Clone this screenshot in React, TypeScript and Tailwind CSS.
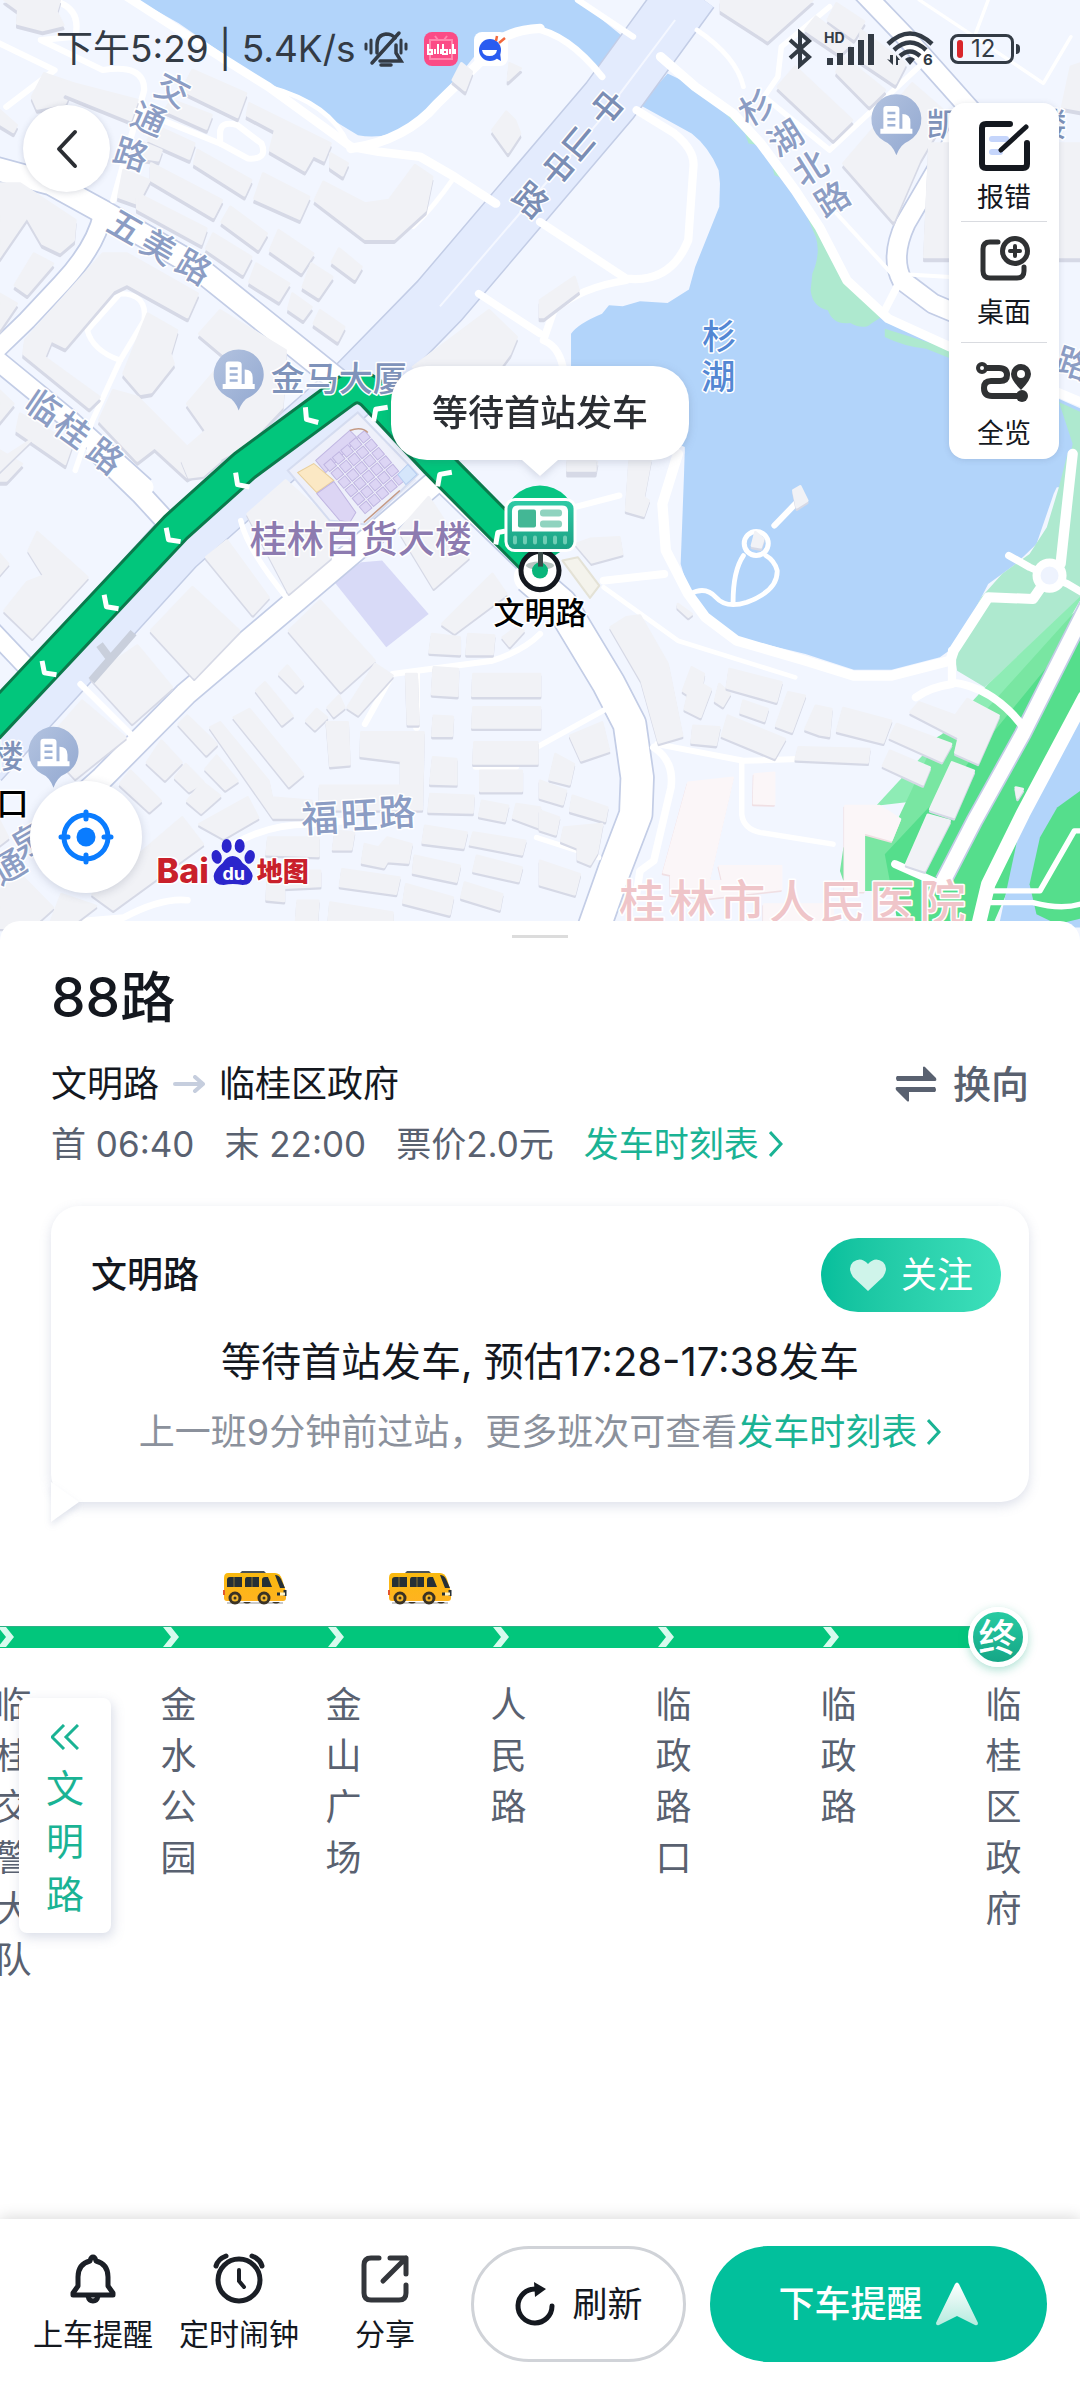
import React from "react";

// ---------- map data ----------
// the map is split in four tiles, each one is drawn in its own tile units

type Road = { d: string; w: number };
type Shape = { d: string; c: string };
type Tile = {
  x: number;
  y: number;
  areas: Shape[];
  cased: Road[];
  roads: Road[];
  buildings: string[];
};

const WATER = "#b2d4fa";

const tiles: Tile[] = [
  {
    x: 0,
    y: 0,
    areas: [
      {
        c: WATER,
        d: "M400 0L520 70L640 155L770 250L880 300L960 355L1040 405Q1090 415 1140 400Q1200 380 1240 330L1330 230L1400 140Q1450 95 1520 80L1580 85V0Z",
      },
    ],
    cased: [
      { d: "M-30 500L150 550L300 635L560 790L850 1030L1030 1180", w: 66 },
      { d: "M300 640Q280 740 180 850L80 960L-30 1070", w: 50 },
      { d: "M-30 1060L200 1255L420 1460", w: 54 },
    ],
    roads: [
      { d: "M370 -10L640 170L780 260L900 350L1020 440L1100 455L1220 470L1320 530L1440 610", w: 26 },
      { d: "M1020 445Q1180 420 1270 310L1390 190Q1440 90 1568 85", w: 28 },
      { d: "M780 260Q960 310 1010 430", w: 14 },
      { d: "M1320 530Q1260 620 1200 680", w: 14 },
      { d: "M150 0Q240 20 220 110L120 120L300 210Q420 190 420 270L330 600", w: 18 },
      { d: "M0 130L160 210L20 320", w: 18 },
      { d: "M330 300L520 380L640 430", w: 18 },
      { d: "M640 400Q640 360 690 375L760 430Q780 480 720 475L640 430Z", w: 18 },
      { d: "M350 880Q430 880 420 960L350 1080Q270 1050 255 990Z", w: 16 },
      { d: "M350 1080L270 1260L220 1410", w: 16 },
      { d: "M1390 880L1568 1000", w: 22 },
    ],
    buildings: [
      "15,0 55,30 52,70 125,90 185,75 165,35 175,0",
      "95,290 130,220 215,250 190,310 110,325",
      "215,250 400,300 380,360 190,280",
      "560,210 715,280 690,350 530,270",
      "500,300 615,345 600,385 480,330",
      "725,310 960,430 940,480 910,465 885,510 785,450 800,390 718,345",
      "960,460 1010,490 995,525 960,500",
      "460,380 565,430 550,475 430,420",
      "575,450 730,540 710,585 565,490",
      "400,420 470,450 460,480 400,470",
      "440,490 645,600 620,650 440,540",
      "360,510 435,540 400,610 345,590",
      "765,520 898,590 870,655 740,595",
      "400,580 600,685 585,730 400,625",
      "940,545 1060,610 1130,600 1205,495 1255,530 1235,630 1145,715 1060,715 915,600",
      "670,620 775,700 750,745 645,665",
      "620,700 730,770 705,820 600,745",
      "810,690 910,760 875,815 785,750",
      "745,790 840,850 810,900 725,845",
      "905,790 965,830 925,890 880,860",
      "985,745 1050,800 1030,835 965,785",
      "850,880 905,920 880,955 838,925",
      "930,930 1000,980 980,1020 912,970",
      "0,550 60,550 220,660 215,720 175,755 125,730 80,650 0,770",
      "100,760 155,790 80,880 45,855",
      "0,880 50,910 0,985",
      "300,760 370,760 575,880 545,950 370,850 330,870 190,1040 150,1020 130,1070 290,1190 260,1220 70,1060 75,1020",
      "430,940 515,990 495,1060 505,1090 440,1175 410,1180 360,1120",
      "640,930 830,1050 820,1220 720,1330 545,1430 450,1340 400,1380 290,1260 330,1170 400,1190 545,1340 600,1290 545,1210 660,1070 580,1000",
      "1420,930 1500,1010 1480,1060 1380,1200 1200,1100",
      "1340,190 1370,215 1350,270 1315,240",
      "1480,190 1512,205 1475,240",
      "1470,335 1495,360 1510,400 1475,455 1430,390",
      "0,1170 40,1210 0,1260",
      "60,1240 210,1330 190,1390 50,1290",
      "0,1350 65,1390 20,1440 0,1440",
      "0,330 50,375 40,395 0,370",
    ],
  },
  {
    x: 540,
    y: 0,
    areas: [
      { c: WATER, d: "M-20 0H110L265 130L185 220L180 215Q80 100 -20 85Z" },
      {
        c: WATER,
        d: "M370 220L440 255L640 430L800 650L880 830L1000 950L1190 1050L1580 1230V1460H420V1340L90 1200V1000Q110 970 180 940L200 915L240 918L290 903L370 908L432 868L450 800L520 620L522 550L518 510Q490 440 440 400L290 315Z",
      },
      {
        c: "#aee9cf",
        d: "M435 250L540 330L600 380L640 435L605 430L595 400L510 310L470 275ZM670 480L760 590L750 600L720 540L680 525ZM750 590L800 650L890 830L990 950L960 970Q940 990 900 968Q850 975 835 930Q790 920 785 870L790 820Q815 760 800 710Z",
      },
      { c: "#aee9cf", d: "M1000 985L1200 1050V1078L1120 1045Q1060 1040 1000 1010Z" },
      { c: "#aee9cf", d: "M1505 1205L1568 1235V1460H1520L1545 1330Z" },
    ],
    cased: [
      { d: "M930 -30L1060 110L1250 330L1190 440L1060 670Q1015 770 1050 840L1140 910L1220 945", w: 54 },
    ],
    roads: [
      { d: "M350 170L450 260L560 340L640 430L740 570L810 680L890 840L1010 955L1190 1040L1568 1205", w: 28 },
      { d: "M280 330L390 400Q450 450 445 500L430 720Q380 850 250 835L0 665", w: 24 },
      { d: "M250 840Q120 860 40 930L10 1020Q60 1040 70 1120", w: 22 },
      { d: "M-20 85Q80 100 180 230", w: 20 },
      { d: "M110 0L270 110", w: 18 },
      { d: "M455 90Q570 170 590 260", w: 14 },
      { d: "M840 20L700 140L690 230L650 290L840 450L1130 170", w: 16 },
      { d: "M860 640L1020 820L1190 830", w: 12 },
      { d: "M1000 930L1050 830", w: 22 },
      { d: "M1300 0L1260 110L1460 250L1540 110", w: 10 },
      { d: "M1100 0L1260 110", w: 10 },
    ],
    buildings: [
      "525,0 525,30 660,120 790,0",
      "860,10 940,65 910,115 835,60",
      "800,50 900,130 870,160 770,90",
      "930,90 1060,190 1030,250 930,180",
      "740,200 905,360 850,415 690,260",
      "880,170 1000,270 955,315 860,215",
      "1080,250 1180,340 1100,480 1025,660 880,490",
      "1130,430 1568,430 1568,770 1115,770",
      "1540,200 1568,190 1568,330 1515,320",
      "100,830 112,870 10,950 0,950 0,900",
      "80,1385 165,1385 160,1415 80,1415",
    ],
  },
  {
    x: 0,
    y: 460,
    areas: [
      { c: "#e8ecf8", d: "M840 40L1030 -120L1210 60L1060 190L1000 190Z" },
      { c: "#d8daf7", d: "M968 360L1050 305L1110 300L1245 460L1122 560Z" },
    ],
    cased: [
      { d: "M280 -30L410 100L490 190", w: 56 },
      { d: "M-30 500L80 620", w: 50 },
      { d: "M1280 50L1100 210L860 420L540 700L300 950L160 1080", w: 64 },
      { d: "M1250 60L1560 370", w: 14 },
    ],
    roads: [
      { d: "M700 180Q720 270 840 420", w: 16 },
      { d: "M235 670L390 830", w: 18 },
      { d: "M1060 790L1140 640L1430 600Q1520 570 1568 520", w: 18 },
      { d: "M1210 640V800", w: 20 },
      { d: "M680 1150Q780 1090 900 1090L1000 1080", w: 20 },
      { d: "M250 1380L360 1370Q470 1310 545 1318", w: 20 },
      { d: "M1380 920H1500", w: 14 },
    ],
    buildings: [
      "0,0 90,-60 0,30",
      "530,0 640,0 590,45 550,50",
      "110,215 255,350 95,530 15,450 80,365 130,345 85,270",
      "0,280 25,310 0,340",
      "830,60 970,190 960,290 840,395 720,160",
      "600,290 660,240 780,410 735,460",
      "560,380 695,510 565,650 440,510",
      "400,555 500,680 385,785 265,650",
      "930,420 1088,600 990,690 840,510",
      "240,720 365,830 220,950 130,850",
      "1160,210 1245,110 1360,290 1260,380",
      "1430,340 1470,400 1320,515 1285,490",
      "1500,500 1520,510 1480,555 1460,530",
      "1255,520 1335,530 1335,580 1248,575",
      "1360,520 1435,525 1430,580 1355,580",
      "1090,610 1140,645 1040,760 1010,740",
      "985,705 1000,740 970,765 952,740",
      "920,745 950,770 915,805 890,780",
      "835,615 880,670 860,690 812,640",
      "770,665 850,765 820,790 745,690",
      "725,745 880,940 840,975 680,770",
      "545,765 630,850 600,880 520,790",
      "640,785 780,960 790,1010 905,1020 900,1070 795,1070 612,800",
      "470,840 528,905 480,955 428,905",
      "630,885 690,960 655,985 598,925",
      "540,910 592,965 550,990 510,950",
      "590,965 640,1005 585,1055 545,1020",
      "720,1010 750,1070 650,1130 580,1090",
      "380,930 468,1020 435,1050 350,970",
      "530,1070 590,1150 330,1345 270,1300",
      "950,785 1010,785 1015,910 960,915",
      "1050,815 1230,815 1225,1045 930,1045 930,975 1165,975 1165,900 1048,885",
      "1180,640 1210,640 1215,790 1185,790",
      "1260,620 1330,625 1328,705 1255,700",
      "1375,640 1568,640 1568,705 1372,705",
      "1375,740 1568,740 1568,800 1372,800",
      "1260,765 1315,768 1312,825 1256,825",
      "1378,845 1560,845 1560,908 1375,908",
      "1258,890 1325,895 1325,970 1250,968",
      "1395,930 1515,930 1515,990 1395,990",
      "1250,1000 1375,1005 1372,1055 1245,1052",
      "1400,1020 1475,1035 1465,1080 1392,1065",
      "1500,1030 1568,1040 1568,1100 1490,1070",
      "1235,1095 1355,1115 1345,1160 1228,1145",
      "1375,1115 1525,1140 1515,1180 1365,1150",
      "1205,1185 1335,1215 1325,1262 1200,1235",
      "1385,1185 1515,1220 1505,1260 1375,1230",
      "1180,1270 1315,1310 1305,1360 1172,1325",
      "1350,1265 1458,1300 1450,1345 1340,1310",
      "995,1225 1160,1250 1150,1298 988,1275",
      "1060,1150 1100,1160 1125,1130 1195,1150 1185,1205 1125,1200 1115,1218 1052,1205",
      "780,1130 925,1130 925,1185 775,1180",
      "975,1110 1028,1115 1020,1165 968,1165",
      "780,1230 930,1230 930,1275 825,1280 825,1320 775,1315",
      "865,1320 925,1320 920,1390 860,1390",
      "960,1325 1140,1355 1140,1400 955,1380",
      "0,1290 60,1240 155,1340 90,1400 0,1400",
      "180,1300 280,1335 210,1390 150,1380",
      "0,1080 25,1130 0,1150",
    ],
  },
  {
    x: 540,
    y: 460,
    areas: [
      {
        c: WATER,
        d: "M420 -20L408 310L440 420L500 480L570 530L770 580L910 627H1020L1160 590L1200 560L1260 450L1300 370L1380 310L1440 250L1490 100L1545 -20Z",
      },
      { c: "#aee9cf", d: "M1530 -20L1505 80L1470 200L1420 280L1340 340L1280 410L1200 570L1210 630L1290 680L1580 400V-20Z" },
      { c: "#8eecb5", d: "M1580 395L1300 670L975 1035L1100 1020L1300 900Z" },
      { c: "#79e6a2", d: "M1580 420L1300 740L1150 830L1040 1070L880 1160L870 1230L890 1290H1200L1580 700Z" },
      { c: "#55de8c", d: "M1580 480L1200 960L1000 1180L1040 1400H1310L1580 760Z" },
      { c: WATER, d: "M1580 750L1470 940L1390 1110L1330 1400H1580Z" },
      { c: "#55de8c", d: "M1580 980L1500 1040L1450 1130L1420 1270L1440 1360L1500 1390L1580 1370Z" },
    ],
    cased: [
      { d: "M-30 350L60 430L130 550L200 670L260 790L282 950L278 1060L215 1230L150 1420", w: 92 },
      { d: "M1600 410L1400 820L1260 1080L1170 1260", w: 42 },
    ],
    roads: [
      { d: "M400 -20L355 130L365 270L430 400L480 470L570 540L770 600L910 645H1020L1190 600L1200 570L1250 490L1300 410L1430 415L1460 370", w: 30 },
      { d: "M185 360L360 340", w: 24 },
      { d: "M185 380L400 540L740 650", w: 14 },
      { d: "M100 140L230 105", w: 18 },
      { d: "M1545 -20L1530 120L1510 310", w: 30 },
      { d: "M1360 285L1420 320L1530 370L1580 400", w: 22 },
      { d: "M1195 570V670Q1130 680 1090 710M1195 665Q1320 680 1410 810", w: 24 },
      { d: "M1580 710L1400 1060L1300 1270L1270 1400", w: 42 },
      { d: "M1300 1290H1450L1550 1110H1580M1300 1325L1430 1325Q1520 1350 1580 1325", w: 16 },
      { d: "M1030 1210L1160 1270", w: 24 },
      { d: "M340 850L590 900L750 895", w: 18 },
      { d: "M585 900V1060Q590 1105 640 1115L850 1150", w: 16 },
      { d: "M330 860Q390 900 380 980L330 1200L290 1230L280 1300", w: 22 },
      { d: "M-10 860L200 740", w: 16 },
      { d: "M-10 1130L80 1160L170 1190", w: 16 },
      { d: "M435 400Q480 375 510 410Q540 445 600 425Q690 390 688 330Q680 300 655 285M560 425Q560 330 590 285", w: 14 },
      { d: "M680 195L750 120", w: 18 },
    ],
    buildings: [
      "260,0 320,0 300,110 315,120 300,165 250,150",
      "80,0 160,0 160,30 80,30",
      "145,235 230,230 238,280 150,305 105,250",
      "400,430 440,460 430,468 400,440",
      "205,500 250,470 290,465 370,610 412,825 345,845 295,660",
      "440,620 475,640 470,670 495,685 465,768 420,745 430,700 415,690",
      "520,670 550,700 530,735 508,720",
      "550,625 700,665 685,722 542,680",
      "590,720 660,745 650,780 582,755",
      "720,695 768,705 730,812 685,795",
      "800,735 845,745 838,825 810,820 770,805",
      "445,795 520,800 510,852 440,845",
      "545,765 710,835 680,890 528,825",
      "880,742 1018,780 995,845 862,810",
      "1035,790 1192,850 1165,900 1015,830",
      "1100,725 1205,765 1240,715 1330,765 1270,905 1205,875 1215,830 1075,755",
      "750,860 955,865 950,905 742,895",
      "1015,870 1130,920 1110,970 995,915",
      "1195,905 1258,930 1200,1068 1132,1045",
      "1125,1062 1188,1080 1115,1228 1062,1210",
      "180,785 200,870 120,898 88,825",
      "45,880 98,910 85,970 28,955",
      "0,960 75,990 65,1030 0,1010",
      "95,1005 195,1040 188,1080 88,1050",
      "0,1050 55,1070 45,1120 0,1105",
      "70,1100 180,1090 165,1175 145,1210 110,1195 110,1160 62,1140",
      "0,1200 115,1240 100,1300 0,1270",
      "625,215 648,235 640,260 615,255",
      "735,90 755,78 775,120 745,140",
      "1380,980 1400,985 1385,1010",
    ],
  },
];

const redBlocks = [
  "430,965 560,950 490,1260 530,1260 520,1215 700,1215 700,1285 490,1310 380,1300 380,1240 358,1235",
  "622,940 680,935 680,1030 620,1028",
  "885,1035 985,1035 1045,1075 1020,1138 940,1115 940,1290 885,1290",
  "650,1330 850,1330 850,1400 650,1400",
];

type Label = { t: string; x: number; y: number; r?: number; s?: number; c?: string };
const ROAD_TEXT = "#8c9dc4";
const POI_TEXT = "#7f93ba";
const labels: Label[] = [
  { t: "交", x: 174, y: 88, r: 28 },
  { t: "通", x: 150, y: 117, r: 24 },
  { t: "路", x: 132, y: 152, r: 18 },
  { t: "五", x: 127, y: 225, r: 30 },
  { t: "美", x: 160, y: 245, r: 30 },
  { t: "路", x: 195, y: 265, r: 30 },
  { t: "临", x: 45, y: 405, r: 34 },
  { t: "桂", x: 74, y: 428, r: 36 },
  { t: "路", x: 107, y: 454, r: 38 },
  { t: "中", x: 608, y: 106, r: 40, c: "#7a8db4" },
  { t: "山", x: 581, y: 140, r: 40, c: "#7a8db4" },
  { t: "中", x: 559, y: 167, r: 40, c: "#7a8db4" },
  { t: "路", x: 532, y: 198, r: 40, c: "#7a8db4" },
  { t: "杉", x: 755, y: 106, r: -30 },
  { t: "湖", x: 784, y: 136, r: -32 },
  { t: "北", x: 809, y: 166, r: -32 },
  { t: "路", x: 831, y: 197, r: -32 },
  { t: "杉", x: 719, y: 334, c: "#5387d3" },
  { t: "湖", x: 718, y: 374, c: "#5387d3" },
  { t: "路", x: 1073, y: 361, r: 18 },
  { t: "金马大厦", x: 339, y: 376, c: POI_TEXT },
  { t: "桂林百货大楼", x: 361, y: 536, s: 37, c: "#8d7bb0" },
  { t: "凯", x: 942, y: 122, s: 32, c: POI_TEXT },
  { t: "楼", x: 1050, y: 122, s: 32, c: POI_TEXT },
  { t: "楼", x: 8, y: 753, s: 32, c: POI_TEXT },
  { t: "福", x: 320, y: 815, s: 37, r: -3 },
  { t: "旺", x: 359, y: 812, s: 37, r: -3 },
  { t: "路", x: 397, y: 809, s: 37, r: -3 },
  { t: "通", x: 8, y: 864, r: -30 },
  { t: "泉", x: 28, y: 838, r: -30 },
];

const ROUTE = "M-20 736L176 527L245 465L344 392Q358 381 372 393L436 461L540 566";

function Poi({ x, y }: { x: number; y: number }) {
  return (
    <g transform={`translate(${x} ${y})`}>
      <path d="M0 35Q-4 24 -12 21A25 25 0 1 1 12 21Q4 24 0 35Z" fill="url(#poi)" />
      <path d="M-13 10V-11Q-13 -14 -10 -14H-1Q3 -14 3 -11V10ZM6 10V-6Q14 -6 14 2V10Z" fill="#fff" />
      <path d="M-16 11H16" stroke="#fff" strokeWidth="5" />
      <path d="M-9 -7H-1M-9 -1H-1M-9 5H-1" stroke="#9fb3d6" strokeWidth="2.5" />
    </g>
  );
}

function BaseMap() {
  const at = (t: Tile) => `translate(${t.x} ${t.y}) scale(.3444 .3333)`;
  return (
    <svg
      className="block h-full w-full font-['Noto_Sans_CJK_SC',sans-serif]"
      viewBox="0 0 1080 940"
      preserveAspectRatio="xMidYMin slice"
      aria-label="地图"
    >
      <defs>
        <linearGradient id="poi" x1="0" y1="0" x2="1" y2="1">
          <stop offset="0" stopColor="#b3c3e0" />
          <stop offset="1" stopColor="#92a8d0" />
        </linearGradient>
        <linearGradient id="busFace" x1="0" y1="0" x2="0" y2="1">
          <stop offset="0" stopColor="#2fcba6" />
          <stop offset="1" stopColor="#1a9f82" />
        </linearGradient>
      </defs>
      <rect width="1080" height="940" fill="#f2f6ff" />

      {tiles.map((t, i) => (
        <g key={i} transform={at(t)}>
          {t.areas.map((a, j) => (
            <path key={j} d={a.d} fill={a.c} />
          ))}
        </g>
      ))}

      {/* 中山中路 */}
      <g fill="none">
        <path d="M690 -10L610 100L440 300L358 384L176 545L-20 760" stroke="#c3cde6" strokeWidth="60" />
        <path d="M690 -10L610 100L440 300L358 384L176 545L-20 760" stroke="#e3ebfd" strokeWidth="57" />
        <path d="M675 20L600 120L440 306" stroke="#f4f7ff" strokeWidth="2" />
      </g>

      <g fill="none" strokeLinejoin="round">
        {tiles.map((t, i) => (
          <g key={i} transform={at(t)} stroke="#c3cde6">
            {t.cased.map((r, j) => (
              <path key={j} d={r.d} strokeWidth={r.w + 10} />
            ))}
          </g>
        ))}
        {tiles.map((t, i) => (
          <g key={i} transform={at(t)} stroke="#fff" strokeLinecap="round">
            {t.roads.concat(t.cased).map((r, j) => (
              <path key={j} d={r.d} strokeWidth={r.w} />
            ))}
          </g>
        ))}
      </g>

      {/* small island and roundabout in the lake */}
      <circle cx="756" cy="543" r="12" fill="none" stroke="#fff" strokeWidth="5" />
      <circle cx="1049" cy="575" r="13" fill="#eef3fe" stroke="#fff" strokeWidth="8" />

      {tiles.map((t, i) => (
        <g key={i} transform={at(t)} strokeWidth="8" strokeLinejoin="round">
          {t.buildings.map((b, j) => (
            <g key={j}>
              <polygon points={b} fill="#d6d9e6" stroke="#d6d9e6" transform={i < 2 ? "translate(0 12)" : "translate(0 7)"} />
              <polygon points={b} fill="#f1f2f6" stroke="#f1f2f6" />
            </g>
          ))}
        </g>
      ))}
      <g transform="translate(540 460) scale(.3444 .3333)" strokeWidth="6" strokeLinejoin="round">
        {redBlocks.map((b, j) => (
          <g key={j}>
            <polygon points={b} fill="#f0dfe3" stroke="#f0dfe3" transform="translate(-2 5)" />
            <polygon points={b} fill="#fbf6f8" stroke="#fbf6f8" />
          </g>
        ))}
        <polygon points="65,300 110,290 172,375 145,412" fill="#f4f3ec" stroke="#e4e2d6" />
      </g>

      {/* department store floor plan */}
      <polygon points="288,470 358,412 418,474 366,524 330,520" fill="#eef0fa" stroke="#d5dcf0" strokeWidth="2" />
      <polygon points="298,472 314,463 334,480 317,492" fill="#fbe8c4" stroke="#e9cf9d" />
      <g fill="#dcd5f4" stroke="#c0b6e2">
        <polygon points="316,460 350,430 358,438 326,472" />
        <polygon points="317,493 334,481 356,512 350,522 340,520" />
        {[0, 1, 2, 3, 4, 5].map((r) =>
          [0, 1, 2, 3, 4].map((c) => (
            <rect
              key={`${r}-${c}`}
              x={c * 11 - 27}
              y={r * 11 - 33}
              width="9"
              height="9"
              transform="translate(366 472) rotate(-40)"
            />
          )),
        )}
      </g>
      <polygon points="398,474 408,464 417,474 406,484" fill="#d5e6fb" stroke="#b5cdf0" />
      <path d="M350 430Q362 426 368 432M364 522L400 490" fill="none" stroke="#c59a84" strokeWidth="1.5" />

      {/* footbridge */}
      <path d="M92 680L134 632M100 644L112 660" stroke="#c9cfdc" strokeWidth="8" />

      <Poi x={239} y={375} />
      <Poi x={896} y={120} />
      <Poi x={54} y={752} />

      {/* bus route */}
      <g fill="none" strokeLinejoin="round">
        <path d={ROUTE} stroke="#0b7a4c" strokeWidth="34" />
        <path d={ROUTE} stroke="#02c67c" strokeWidth="28" />
        <g stroke="#fff" strokeWidth="5">
          {[
            [309, 417, -40],
            [240, 482, -44],
            [171, 537, -46],
            [109, 604, -46],
            [47, 670, -46],
            [378, 411, 45],
            [442, 476, 45],
            [500, 534, 45],
          ].map(([x, y, a]) => (
            <path key={x} d="M4 -10L-3 0L4 10" transform={`translate(${x} ${y}) rotate(${a})`} />
          ))}
        </g>
      </g>

      <g textAnchor="middle" fontWeight="500" paintOrder="stroke" stroke="#fff" strokeWidth="3" strokeLinejoin="round">
        {labels.map((l, i) => (
          <text
            key={i}
            fill={l.c ?? ROAD_TEXT}
            fontSize={l.s ?? 34}
            dominantBaseline="central"
            transform={`translate(${l.x} ${l.y}) rotate(${l.r ?? 0})`}
          >
            {l.t}
          </text>
        ))}
        {"桂林市人民医院".split("").map((ch, i) => (
          <text key={i} x={642 + i * 50} y="918" fontSize="46" fill="#efc5c9">
            {ch}
          </text>
        ))}
        <text x="13" y="814" fontSize="32" fill="#000">
          口
        </text>
      </g>

      {/* station marker */}
      <circle cx="540" cy="521" r="36" fill="#08c582" />
      <path d="M505 535Q520 556 540 560Q562 556 575 535Z" fill="#08b57a" />
      <circle cx="540" cy="570" r="19" fill="#fff" stroke="#14181f" strokeWidth="5" />
      <ellipse cx="540" cy="565" rx="14" ry="4" fill="#b9c4c2" />
      <circle cx="540" cy="570" r="8" fill="#08b57a" />
      <rect x="538" y="550" width="5" height="16" fill="#3a4a48" />
      <rect x="506" y="499" width="69" height="51" rx="9" fill="url(#busFace)" stroke="#fff" strokeWidth="3" />
      <path d="M512 531V511Q512 505 518 505H562Q568 505 568 511V531Z" fill="#fff" />
      <rect x="518" y="509" width="18" height="18" rx="2" fill="#43b795" />
      <rect x="540" y="509" width="22" height="7" rx="3" fill="#8fd3bf" />
      <rect x="540" y="520" width="22" height="7" rx="3" fill="#8fd3bf" />
      <path d="M515 537V542M525 537V542M535 537V542M545 537V542M555 537V542M565 537V542" stroke="#6fcdb5" strokeWidth="4" strokeLinecap="round" />
      <text x="540" y="623" textAnchor="middle" fontSize="31" fontWeight="500" fill="#000" stroke="#fff" strokeWidth="3" paintOrder="stroke">
        文明路
      </text>

      {/* Baidu logo */}
      <g paintOrder="stroke" stroke="#fff" strokeWidth="3" strokeLinejoin="round">
        <text x="157" y="882" fontSize="34" fontWeight="800" fill="#c9202b" className="font-['Inter',sans-serif]">
          Bai
        </text>
        <text x="257" y="880" fontSize="26" fontWeight="900" fill="#c9202b">
          地图
        </text>
      </g>
      <g fill="#2b25cc">
        <ellipse cx="217" cy="856" rx="5" ry="7" transform="rotate(-15 217 856)" />
        <ellipse cx="227" cy="845" rx="5" ry="7" />
        <ellipse cx="240" cy="845" rx="5" ry="7" />
        <ellipse cx="250" cy="856" rx="5" ry="7" transform="rotate(15 250 856)" />
        <path d="M233 855Q239 855 243 862Q252 868 253 875Q252 884 243 884Q233 882 224 884Q214 884 214 875Q215 868 223 862Q227 855 233 855Z" />
      </g>
      <text x="234" y="879" textAnchor="middle" fontSize="18" fontWeight="700" fill="#fff" className="font-['Inter',sans-serif]">
        du
      </text>
    </svg>
  );
}

// ---------- status bar ----------

function StatusBar() {
  return (
    <header className="absolute inset-x-0 top-0 flex items-center justify-between pt-6 pr-[60px] pl-14 text-[#333b45]">
      <div className="flex items-center">
        <span className="text-[37px] leading-[50px]">下午5:29 | 5.4K/s</span>
        <svg className="ml-2 h-10 w-11" viewBox="0 0 44 40" fill="none" stroke="currentColor" strokeWidth="3.5" strokeLinecap="round">
          <path d="M13 24V16Q13 6 22 5Q28 5 31 9M32 16V24L37 32H16M17 36H27" />
          <path d="M35 4L8 34" />
          <path d="M2 15V20M7 11V24M42 15V20M37 11V24" strokeWidth="3" />
        </svg>
        <svg className="ml-4 h-[34px] w-[34px]" viewBox="0 0 34 34">
          <rect width="34" height="34" rx="8" fill="#fb4b86" />
          <path d="M11 4L14 8M23 4L20 8M6 8H28V27H6Z" fill="none" stroke="#ff86ad" strokeWidth="2" />
          <path
            d="M4 12V22H8V18H5M11 17V22M14 12V22M17 17V22M19 12V22H23V18H20M26 17V22M29 12V22M31 17V22"
            fill="none"
            stroke="#fff"
            strokeWidth="2"
          />
        </svg>
        <svg className="ml-4 h-[34px] w-[34px]" viewBox="0 0 34 34">
          <rect width="34" height="34" rx="8" fill="#fff" />
          <circle cx="16" cy="18" r="11" fill="#2a5cf0" />
          <path d="M20 25L27 29L26 20Z" fill="#2a5cf0" />
          <path d="M8 18H23Q22 24 15.500 24Q9 24 8 18Z" fill="#fff" />
          <path d="M22 9L23 4M25 11L31 6" stroke="#f2683c" strokeWidth="2.500" />
        </svg>
      </div>
      <div className="flex items-center">
        <svg className="h-10 w-6" viewBox="0 0 24 40" fill="none" stroke="currentColor" strokeWidth="4">
          <path d="M2 11L21 28L12 36V4L21 12L2 29" />
        </svg>
        <svg className="ml-3 h-[34px] w-[50px]" viewBox="0 0 50 34" fill="currentColor">
          <text x="0" y="11" fontSize="14" fontWeight="700">
            HD
          </text>
          <path d="M3 26H9V33H3ZM13 21H19V33H13ZM24 15H30V33H24ZM34 8H40V33H34ZM44 2H50V33H44Z" />
        </svg>
        <svg className="ml-3 h-9 w-12" viewBox="0 0 48 36">
          <g fill="none" stroke="currentColor" strokeWidth="4.500">
            <path d="M2 13Q24 -8 46 13M8 19Q24 4 40 19M14 25Q24 16 34 25" />
          </g>
          <path d="M19 28Q24 24 29 28L24 34ZM1 28L7 34V24H4V29ZM10 34V24L14 29H12V34Z" fill="currentColor" />
          <text x="37" y="34" fontSize="15" fontWeight="700" fill="currentColor">
            6
          </text>
        </svg>
        <div className="ml-4 flex h-[30px] w-16 items-center rounded-lg border-3 border-current pl-1">
          <span className="h-[18px] w-1.5 rounded-sm bg-[#d9262b]"></span>
          <span className="ml-2 text-2xl">12</span>
        </div>
        <span className="ml-0.5 h-2.5 w-1 rounded-r bg-[#333b45]"></span>
      </div>
    </header>
  );
}

// ---------- map controls ----------

function ReportIcon() {
  return (
    <svg className="h-[50px] w-[52px]" viewBox="0 0 52 50" fill="none" strokeLinecap="round" strokeLinejoin="round">
      <path d="M14 18H28M14 31H22" stroke="#c5d5fb" strokeWidth="6" />
      <path d="M32 3H8Q4 3 4 7V43Q4 47 8 47H45Q49 47 49 43V22" stroke="#14181f" strokeWidth="6" />
      <path d="M23 29L48 6" stroke="#14181f" strokeWidth="5" />
    </svg>
  );
}

function DesktopIcon() {
  return (
    <svg className="h-[46px] w-[52px]" viewBox="0 0 52 46" fill="none" stroke="#2f3133" strokeWidth="5" strokeLinecap="round">
      <path d="M20 6H12Q5 6 5 13V35Q5 42 12 42H39Q46 42 46 35V31" />
      <circle cx="37" cy="15" r="12.500" strokeWidth="5" />
      <path d="M32 15H42M37 10V20" strokeWidth="4" />
    </svg>
  );
}

function OverviewIcon() {
  return (
    <svg className="h-[42px] w-14" viewBox="0 0 56 42" fill="none" stroke="#2f3133" strokeWidth="6">
      <circle cx="6" cy="7" r="4" strokeWidth="4" />
      <path d="M10 7H23Q31 7 31 14Q31 20 24 20H15Q8 20 8 27Q8 35 16 35H44" />
      <circle cx="46" cy="35" r="6" fill="#2f3133" stroke="none" />
      <path d="M45 29Q35 19 35 13A10 10 0 0 1 55 13Q55 19 45 29ZM45 9A4 4 0 1 0 45 17A4 4 0 1 0 45 9" fill="#2f3133" fillRule="evenodd" stroke="none" />
    </svg>
  );
}

function MapControls() {
  return (
    <>
      <button
        aria-label="返回"
        className="absolute top-[105px] left-[23px] flex size-[87px] items-center justify-center rounded-full bg-white shadow-[0_1px_6px_rgba(60,70,100,0.2)]"
      >
        <svg className="h-10 w-6" viewBox="0 0 24 40" fill="none" stroke="#2b2e33" strokeWidth="4" strokeLinecap="round" strokeLinejoin="round">
          <path d="M20 3L4 20L20 37" />
        </svg>
      </button>

      <nav className="absolute top-[103px] right-[21px] flex w-[110px] flex-col items-center rounded-2xl bg-white px-3 text-[27px] leading-[30px] text-[#14181f] shadow-[0_1px_6px_rgba(60,70,100,0.15)]">
        <button className="flex w-full flex-col items-center gap-3 border-b border-[#d9dbe0] pt-[18px] pb-2">
          <ReportIcon />
          报错
        </button>
        <button className="flex w-full flex-col items-center gap-4 border-b border-[#d9dbe0] pt-3.5 pb-3.5">
          <DesktopIcon />
          桌面
        </button>
        <button className="flex w-full flex-col items-center gap-4 pt-[18px] pb-2.5">
          <OverviewIcon />
          全览
        </button>
      </nav>

      {/* callout over the station */}
      <div className="absolute top-[366px] left-1/2 flex -translate-x-1/2 flex-col items-center drop-shadow-[0_2px_4px_rgba(60,70,100,0.2)]">
        <p className="rounded-[36px] bg-white px-[41px] py-[22px] text-[36px] leading-[50px] font-medium whitespace-nowrap text-[#2b2e33]">
          等待首站发车
        </p>
        <svg className="h-4 w-9" viewBox="0 0 36 16">
          <path d="M0 0H36L18 16Z" fill="#fff" />
        </svg>
      </div>

      <button
        aria-label="定位"
        className="absolute top-[781px] left-[30px] flex size-28 items-center justify-center rounded-full bg-white shadow-[0_2px_10px_rgba(60,70,100,0.2)]"
      >
        <svg className="size-14" viewBox="0 0 56 56" fill="none" stroke="#0a7cff" strokeWidth="5" strokeLinecap="round">
          <circle cx="28" cy="28" r="22" />
          <circle cx="28" cy="28" r="9.500" fill="#0a7cff" stroke="none" />
          <path d="M28 3V10M28 46V53M3 28H10M46 28H53" />
        </svg>
      </button>
    </>
  );
}

// ---------- line details ----------

function Chevron() {
  return (
    <svg className="ml-2.5 inline-block h-[26px] w-[14px]" viewBox="0 0 14 26" fill="none" stroke="#1ab394" strokeWidth="3">
      <path d="M1 1L12 13L1 25" />
    </svg>
  );
}

function LineInfo() {
  return (
    <div className="px-[51px]">
      <h1 className="mt-6 text-[55px] leading-[70px] font-medium text-[#14181f]">88路</h1>
      <div className="mt-7 flex h-12 items-center justify-between">
        <p className="flex items-center text-[36px] text-[#14181f]">
          文明路
          <svg className="mx-3.5 h-[18px] w-8" viewBox="0 0 32 18" fill="none" stroke="#c6cede" strokeWidth="4" strokeLinecap="round" strokeLinejoin="round">
            <path d="M2 9H30M22 2L30 9L22 16" />
          </svg>
          临桂区政府
        </p>
        <button className="flex items-center gap-4 text-[38px] font-medium text-[#596170]">
          <svg className="h-9 w-[42px]" viewBox="0 0 42 36">
            <path d="M2 10H28V1Q29 0 30 1L41 12Q42 15 40 15H2Q0 12 2 10ZM40 26H14V35Q13 36 12 35L1 24Q0 21 2 21H40Q42 24 40 26Z" fill="#596170" />
          </svg>
          换向
        </button>
      </div>
      <p className="mt-3 flex h-12 items-center gap-[30px] text-[35px] whitespace-nowrap text-[#596170]">
        <span>首 06:40</span>
        <span>末 22:00</span>
        <span>票价2.0元</span>
        <a href="#timetable" className="flex items-center text-[#1ab394]">
          发车时刻表
          <Chevron />
        </a>
      </p>
    </div>
  );
}

function StationCard() {
  return (
    <section className="relative mx-[51px] mt-[38px] rounded-[28px] bg-white px-[28px] pt-8 pb-[46px] shadow-[0_4px_12px_rgba(100,115,160,0.22)]">
      <div className="flex items-center justify-between pl-3">
        <h2 className="text-[36px] leading-[68px] font-medium text-[#14181f]">文明路</h2>
        <button className="flex h-[74px] items-center gap-3.5 rounded-full bg-linear-to-r from-[#05bf9c] to-[#3de0bb] px-7 text-[36px] text-white">
          <svg className="h-8 w-[38px]" viewBox="0 0 38 32">
            <path d="M19 32L4 18Q-2 9 4 3Q12 -3 19 5Q26 -3 34 3Q40 9 34 18Z" fill="#cff4ea" />
          </svg>
          关注
        </button>
      </div>
      <p className="mt-[22px] text-center text-[40px] leading-[56px] text-[#14181f]">等待首站发车, 预估17:28-17:38发车</p>
      <p className="mt-[18px] flex h-12 items-center justify-center text-[36px] whitespace-nowrap text-[#8b919c]">
        上一班9分钟前过站，更多班次可查看
        <a href="#timetable" className="flex items-center text-[#1ab394]">
          发车时刻表
          <Chevron />
        </a>
      </p>
      <svg className="absolute top-full left-0 -mt-5 h-10 w-7 drop-shadow-[0_4px_3px_rgba(100,115,160,0.18)]" viewBox="0 0 28 40">
        <path d="M0 0V40L28 20Z" fill="#fff" />
      </svg>
    </section>
  );
}

// ---------- stations ----------

const stations = [
  { name: "临桂交警大队", bus: false },
  { name: "金水公园", bus: true },
  { name: "金山广场", bus: true },
  { name: "人民路", bus: false },
  { name: "临政路口", bus: false },
  { name: "临政路", bus: false },
  { name: "临桂区政府", bus: false },
];

function BusIcon() {
  return (
    <svg className="-mr-8 h-9 w-16" viewBox="0 0 64 36">
      <defs>
        <linearGradient id="busBody" x1="0" y1="0" x2="0" y2="1">
          <stop offset="0" stopColor="#f9b90f" />
          <stop offset="1" stopColor="#ffb31f" />
        </linearGradient>
      </defs>
      <path d="M16 4L19 1H41L44 4Z" fill="#4a5257" />
      <path d="M4 33H60" stroke="#c9c9c9" strokeWidth="2" />
      <path d="M5 3H52Q57 3 59 9L63 22V28Q63 31 60 31H4Q1 31 1 28V8Q1 3 5 3Z" fill="url(#busBody)" />
      <path d="M7 7H19V17H4V10Q4 7 7 7ZM24 7H36V17H22V10Q22 7 24 7ZM42 7H45L49 17H39V10Q39 7 42 7ZM52 5Q56 5 58 9L62 18H57Z" fill="#263036" />
      <path d="M11 7V17M29 7V17" stroke="#8b7433" />
      <path d="M54 24H57M62 20V26" stroke="#263036" strokeWidth="3" />
      <path d="M57 24H62" stroke="#fff2c4" strokeWidth="3" />
      <path d="M1 20V25" stroke="#e4572e" strokeWidth="2" />
      <g fill="#f2b52b" stroke="#3a3224" strokeWidth="3">
        <circle cx="12" cy="28" r="5" />
        <circle cx="41" cy="28" r="5" />
      </g>
      <circle cx="12" cy="28" r="1.500" fill="#3a3224" />
      <circle cx="41" cy="28" r="1.500" fill="#3a3224" />
      <path d="M20 32Q24 35 28 32ZM49 32Q53 35 57 32Z" fill="#3a3224" />
    </svg>
  );
}

function StationStrip() {
  return (
    <section className="relative mt-[68px] overflow-hidden pb-20">
      <div className="flex h-9 justify-end">
        {stations.map((s) => (
          <div key={s.name} className="flex w-[165px] shrink-0 justify-end">
            {s.bus && <BusIcon />}
          </div>
        ))}
      </div>
      <div className="mt-5 flex justify-end">
        {stations.map((s, i) => {
          const last = i === stations.length - 1;
          return (
            <div key={s.name} className="relative flex h-[22px] w-[165px] shrink-0 items-center justify-center">
              <div
                className={
                  last
                    ? "absolute inset-y-0 left-0 w-1/2 border-t border-[#2bb286] bg-[#02c67c]"
                    : "absolute inset-0 border-t border-[#2bb286] bg-[#02c67c]"
                }
              ></div>
              {last ? (
                <span className="relative flex size-[60px] shrink-0 items-center justify-center rounded-full border-5 border-white bg-linear-to-b from-[#27cba2] to-[#15a686] text-[38px] leading-none font-medium text-white shadow-[0_3px_10px_rgba(20,170,130,0.35)]">
                  终
                </span>
              ) : (
                <svg className="relative -left-0.5 h-[20px] w-4" viewBox="0 0 16 20">
                  <path d="M0 0H8L16 10L8 20H0L8 10Z" fill="#d8fbee" />
                </svg>
              )}
            </div>
          );
        })}
      </div>
      <ul className="mt-8 flex justify-end">
        {stations.map((s) => (
          <li key={s.name} className="flex w-[165px] shrink-0 justify-center pl-3">
            <span className="w-9 text-[36px] leading-[51px] break-all text-[#596170]">{s.name}</span>
          </li>
        ))}
      </ul>
      <button className="absolute top-32 left-[19px] flex w-[92px] flex-col items-center rounded-lg bg-white pt-[26px] pb-3 text-[38px] leading-[53px] text-[#1ab394] shadow-[2px_4px_12px_rgba(100,115,160,0.25)]">
        <svg className="mb-3 h-[26px] w-7" viewBox="0 0 28 26" fill="none" stroke="#1ab394" strokeWidth="3">
          <path d="M13 1L1 13L13 25M27 1L15 13L27 25" />
        </svg>
        <span className="w-[38px] break-all">文明路</span>
      </button>
    </section>
  );
}

// ---------- bottom bar ----------

function BottomBar() {
  return (
    <footer className="sticky bottom-0 mt-auto flex h-[181px] items-start bg-white pt-[27px] pr-[33px] pl-5 text-[#14181f] shadow-[0_-2px_14px_rgba(0,0,0,0.14)]">
      <div className="flex text-[30px] leading-9">
        <button className="flex w-[146px] flex-col items-center gap-3 pt-1.5">
          <svg className="size-[52px]" viewBox="0 0 52 52" fill="none" stroke="#1b1f26" strokeWidth="5" strokeLinejoin="round">
            <path d="M26 5Q28 5 29 9Q41 12 41 25V34L46 41V43H6V41L11 34V25Q11 12 23 9Q24 5 26 5Z" />
            <path d="M21 44Q22 49 26 49Q30 49 31 44" />
          </svg>
          上车提醒
        </button>
        <button className="flex w-[146px] flex-col items-center gap-3 pt-1.5">
          <svg className="size-[52px]" viewBox="0 0 52 52" fill="none" stroke="#1b1f26" strokeWidth="5" strokeLinecap="round">
            <circle cx="26" cy="28" r="21" />
            <path d="M26 18V29L31 35" strokeWidth="4" />
            <path d="M3 14Q5 7 13 4M49 14Q47 7 39 4" />
          </svg>
          定时闹钟
        </button>
        <button className="flex w-[146px] flex-col items-center gap-3 pt-1.5">
          <svg className="size-[52px]" viewBox="0 0 52 52" fill="none" stroke="#33363b" strokeWidth="5" strokeLinecap="round" strokeLinejoin="round">
            <path d="M20 6H12Q5 6 5 13V41Q5 48 12 48H40Q47 48 47 41V33" />
            <path d="M31 6H47V22M47 6L24 29" />
          </svg>
          分享
        </button>
      </div>
      <button className="ml-[13px] flex h-[116px] w-[215px] items-center justify-center gap-4 rounded-full border-3 border-[#d0d3d8] text-[35px]">
        <svg className="h-11 w-[42px]" viewBox="0 0 42 44" fill="none" stroke="#14181f" strokeWidth="5" strokeLinecap="round">
          <path d="M22 7A17 17 0 1 0 38 24" />
          <path d="M20 0L32 7L21 15Z" fill="#14181f" stroke="none" />
        </svg>
        刷新
      </button>
      <button className="ml-6 flex h-[116px] flex-1 items-center justify-center gap-3 rounded-full bg-[#02c09c] text-[36px] font-medium text-white">
        下车提醒
        <svg className="h-[44px] w-[44px]" viewBox="0 0 44 44">
          <defs>
            <linearGradient id="go" x1="0" y1="0" x2="0" y2="1">
              <stop offset="0" stopColor="#fff" />
              <stop offset="1" stopColor="#b5ebdf" />
            </linearGradient>
          </defs>
          <path d="M20 2Q22 -1 24 2L43 41Q43 44 40 43L22 34L4 43Q1 44 1 41Z" fill="url(#go)" />
        </svg>
      </button>
    </footer>
  );
}

export default function App() {
  return (
    <div className="flex min-h-screen flex-col bg-white font-['Inter','Noto_Sans_CJK_SC',sans-serif]">
      <div className="relative h-[941px] overflow-hidden">
        <BaseMap />
        <StatusBar />
        <MapControls />
      </div>
      <main className="relative -mt-5 rounded-t-[20px] bg-white pt-3.5">
        <div className="mx-auto h-[3px] w-14 bg-[#dcdcdc]"></div>
        <LineInfo />
        <StationCard />
        <StationStrip />
      </main>
      <BottomBar />
    </div>
  );
}
